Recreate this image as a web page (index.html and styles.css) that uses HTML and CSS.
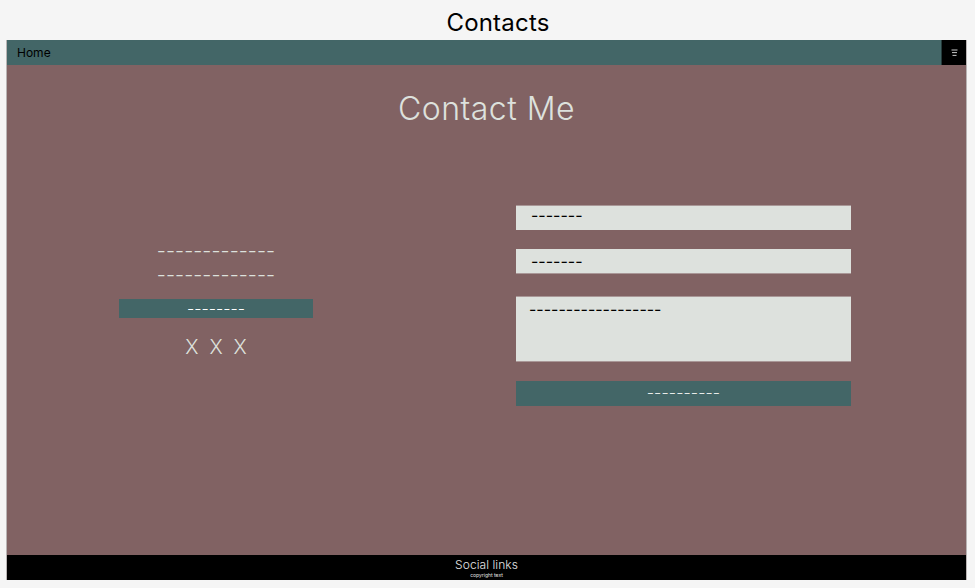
FILE: index.html
```html
<!DOCTYPE html>
<html lang="en">
<head>
  <meta charset="UTF-8">
  <meta name="viewport" content="width=device-width, initial-scale=1.0">
  <title>Contacts</title>
  <link rel="stylesheet" href="styles.css">
</head>
<body>
  <h1 class="page-title">Contacts</h1>

  <div class="frame">
    <nav class="navbar">
      <a class="nav-home" href="#">Home</a>
      <button class="nav-menu" type="button" aria-label="Menu">
        <svg width="7" height="8" viewBox="0 0 7 8">
          <path d="M0.5 1H6.5M1 3.6H6M1.5 6.4H5.5" stroke="#c8c8c8" stroke-width="1" fill="none"/>
        </svg>
      </button>
    </nav>

    <main class="content">
      <h2 class="content-title">Contact Me</h2>

      <div class="columns">
        <section class="info">
          <p class="info-line">-------------</p>
          <p class="info-line">-------------</p>
          <a class="info-button" href="#">--------</a>
          <p class="info-icons"><span>X</span><span>X</span><span>X</span></p>
        </section>

        <form class="contact-form">
          <input class="field field-first" type="text" placeholder="-------">
          <input class="field field-second" type="text" placeholder="-------">
          <textarea class="field field-message" placeholder="------------------"></textarea>
          <button class="form-submit" type="button">----------</button>
        </form>
      </div>
    </main>

    <footer class="footer">
      <p class="footer-links">Social links</p>
      <p class="footer-copy">copyright text</p>
    </footer>
  </div>
</body>
</html>
```

FILE: styles.css
```css
* {
  box-sizing: border-box;
}

body {
  margin: 0;
  height: 588px;
  overflow: hidden;
  font-family: Inter, "Noto Sans", sans-serif;
  background-color: #f5f5f5;
  color: #000;
}

p {
  margin: 0;
}

.page-title {
  margin: 0;
  height: 40px;
  padding-top: 8px;
  padding-left: 21px;
  font-size: 24px;
  line-height: 29px;
  font-weight: 400;
  letter-spacing: 0.2px;
  text-align: center;
}

.frame {
  margin: 0 8px 0 6px;
  height: 540px;
  border-left: 1px solid #b9b4b4;
  border-right: 1px solid #b9b4b4;
  display: flex;
  flex-direction: column;
}

.navbar {
  height: 25px;
  flex: none;
  display: flex;
  justify-content: space-between;
  background-color: #436667;
}

.nav-home {
  padding-left: 10px;
  font-size: 12px;
  line-height: 25px;
  color: #000;
  text-decoration: none;
}

.nav-menu {
  width: 25px;
  padding: 0;
  border: 0;
  border-left: 1px solid #243a3a;
  background-color: #000;
  display: flex;
  align-items: center;
  justify-content: center;
}

.content {
  flex: 1;
  background-color: #816263;
  color: #dde1dd;
}

.content-title {
  margin: 0;
  padding-top: 24px;
  font-size: 32px;
  line-height: 39px;
  font-weight: 300;
  text-align: center;
  letter-spacing: 0.5px;
}

.columns {
  display: flex;
  padding-top: 77px;
}

.info {
  width: 418px;
  padding-top: 34px;
  display: flex;
  flex-direction: column;
  align-items: center;
}

.info-line {
  font-size: 20px;
  line-height: 24px;
  font-weight: 300;
  letter-spacing: 0.05px;
}

.info-button {
  margin-top: 12px;
  width: 194px;
  height: 19px;
  background-color: #436667;
  color: #fff;
  font-size: 16px;
  line-height: 18px;
  font-weight: 300;
  text-align: center;
  text-decoration: none;
}

.info-icons {
  margin-top: 17px;
  display: flex;
  gap: 11px;
  font-size: 20px;
  line-height: 24px;
  font-weight: 300;
}

.contact-form {
  margin-left: 91px;
  width: 335px;
  display: flex;
  flex-direction: column;
}

.field {
  display: block;
  width: 100%;
  border: 0;
  border-radius: 0;
  background-color: #dde1dd;
  font-family: inherit;
  font-size: 16px;
  font-weight: 400;
  color: #000;
  outline: none;
  resize: none;
}

.field::placeholder {
  color: #000;
  opacity: 1;
}

.field-first,
.field-second {
  height: 25px;
  padding: 0 15px;
}

.field-first {
  padding-bottom: 7px;
  border-top: 1px solid #a99797;
}

.field-second {
  margin-top: 19px;
  padding-bottom: 0;
  border-bottom: 1px solid #a99797;
}

.field-message {
  margin-top: 22px;
  height: 66px;
  padding: 2px 13px;
  border-top: 1px solid #a99797;
  border-bottom: 1px solid #a99797;
}

.form-submit {
  margin-top: 19px;
  height: 25px;
  padding: 0 0 3px;
  border: 0;
  background-color: #436667;
  color: #e8ecea;
  font-family: inherit;
  font-size: 16px;
  font-weight: 300;
  letter-spacing: 0.1px;
}

.footer {
  height: 25px;
  flex: none;
  background-color: #000;
  color: #e4e4e4;
  text-align: center;
}

.footer-links {
  padding-top: 3px;
  font-size: 12px;
  line-height: 14px;
  font-weight: 300;
  letter-spacing: 0.05px;
}

.footer-copy {
  font-size: 5px;
  line-height: 6px;
}
```
